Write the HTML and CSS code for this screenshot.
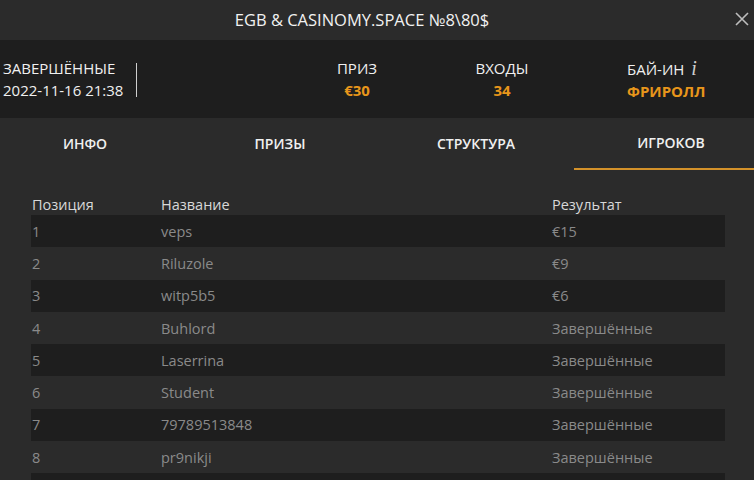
FILE: index.html
```html
<!DOCTYPE html>
<html lang="ru">
<head>
    <meta charset="UTF-8">
    <meta name="viewport" content="width=device-width, initial-scale=1.0">
    <title>EGB &amp; CASINOMY.SPACE №8\80$</title>
    <link rel="stylesheet" href="styles.css">
</head>
<body>
    <div class="modal">
        <header class="title-bar">
            <h1>EGB &amp; CASINOMY.SPACE №8\80$</h1>
            <button class="close" aria-label="Закрыть">
                <svg width="14" height="14" viewBox="0 0 14 14">
                    <path d="M1 1L13 13M13 1L1 13" stroke="#bdbdbd" stroke-width="1.6"/>
                </svg>
            </button>
        </header>

        <section class="summary">
            <div class="status">
                <div>ЗАВЕРШЁННЫЕ</div>
                <div>2022-11-16 21:38</div>
            </div>
            <div class="stat stat-prize">
                <div class="stat-label">ПРИЗ</div>
                <div class="stat-value">€30</div>
            </div>
            <div class="stat stat-entries">
                <div class="stat-label">ВХОДЫ</div>
                <div class="stat-value">34</div>
            </div>
            <div class="stat stat-buyin">
                <div class="stat-label">БАЙ-ИН <span class="info-i">i</span></div>
                <div class="stat-value">ФРИРОЛЛ</div>
            </div>
        </section>

        <nav class="tabs">
            <div class="tab">ИНФО</div>
            <div class="tab">ПРИЗЫ</div>
            <div class="tab">СТРУКТУРА</div>
            <div class="tab active">ИГРОКОВ</div>
        </nav>

        <div class="players">
            <div class="row head">
                <span>Позиция</span>
                <span>Название</span>
                <span>Результат</span>
            </div>
            <div class="row"><span>1</span><span>veps</span><span>€15</span></div>
            <div class="row"><span>2</span><span>Riluzole</span><span>€9</span></div>
            <div class="row"><span>3</span><span>witp5b5</span><span>€6</span></div>
            <div class="row"><span>4</span><span>Buhlord</span><span>Завершённые</span></div>
            <div class="row"><span>5</span><span>Laserrina</span><span>Завершённые</span></div>
            <div class="row"><span>6</span><span>Student</span><span>Завершённые</span></div>
            <div class="row"><span>7</span><span>79789513848</span><span>Завершённые</span></div>
            <div class="row"><span>8</span><span>pr9nikji</span><span>Завершённые</span></div>
            <div class="row"></div>
        </div>
    </div>
</body>
</html>
```

FILE: styles.css
```css
body {
    margin: 0;
    font-family: "Open Sans", "Noto Sans", sans-serif;
    background-color: #2b2b2b;
    color: #eee;
    overflow: hidden;
}
.modal {
    width: 754px;
    height: 480px;
    overflow: hidden;
}
.title-bar {
    height: 40px;
    display: flex;
    align-items: center;
    justify-content: center;
    position: relative;
    background-color: #2b2b2b;
    padding-right: 30px;
    padding-bottom: 2px;
    box-sizing: border-box;
}
.title-bar h1 {
    margin: 0;
    font-size: 16.5px;
    font-weight: normal;
    color: #f2f2f2;
}
.close {
    position: absolute;
    right: 5px;
    top: 12px;
    padding: 0;
    background: none;
    border: none;
    width: 14px;
    height: 14px;
}
.summary {
    height: 78px;
    background-color: #1e1e1e;
    display: grid;
    grid-template-columns: 300px 114px 176px 164px;
    align-items: center;
    font-size: 15px;
}
.status {
    padding-left: 3px;
    line-height: 22px;
    color: #f0f0f0;
    position: relative;
}
.status::after {
    content: "";
    position: absolute;
    left: 136px;
    top: 6px;
    bottom: 4px;
    border-left: 1px solid #cfcfcf;
}
.stat {
    text-align: center;
    line-height: 22px;
}
.stat-buyin {
    text-align: left;
    padding-left: 37px;
}
.stat-label {
    color: #f0f0f0;
}
.stat-value {
    color: #e8961b;
    font-weight: bold;
}
.info-i {
    font-family: "Liberation Serif", serif;
    font-style: italic;
    font-size: 20px;
    color: #cfcfcf;
    margin-left: 3px;
}
.tabs {
    height: 52px;
    display: grid;
    grid-template-columns: 170px 220px 184px 180px;
    background-color: #2b2b2b;
}
.tab {
    display: flex;
    align-items: center;
    justify-content: center;
    font-size: 14px;
    font-weight: 600;
    color: #f0f0f0;
    padding-bottom: 2px;
    box-sizing: border-box;
}
.tab:nth-child(3) {
    padding-right: 12px;
}
.tab.active {
    border-bottom: 2px solid #d4922a;
    padding-left: 14px;
}
.players {
    margin: 23px 29px 0 31px;
}
.row {
    display: grid;
    grid-template-columns: 130px 391px 1fr;
    height: 32.3px;
    align-items: center;
    font-size: 14.5px;
    color: #8a8a8a;
}
.row span:first-child {
    padding-left: 1px;
}
.row:nth-child(even) {
    background-color: #1e1e1e;
}
.row.head {
    height: 22px;
    color: #d8d8d8;
}
```
